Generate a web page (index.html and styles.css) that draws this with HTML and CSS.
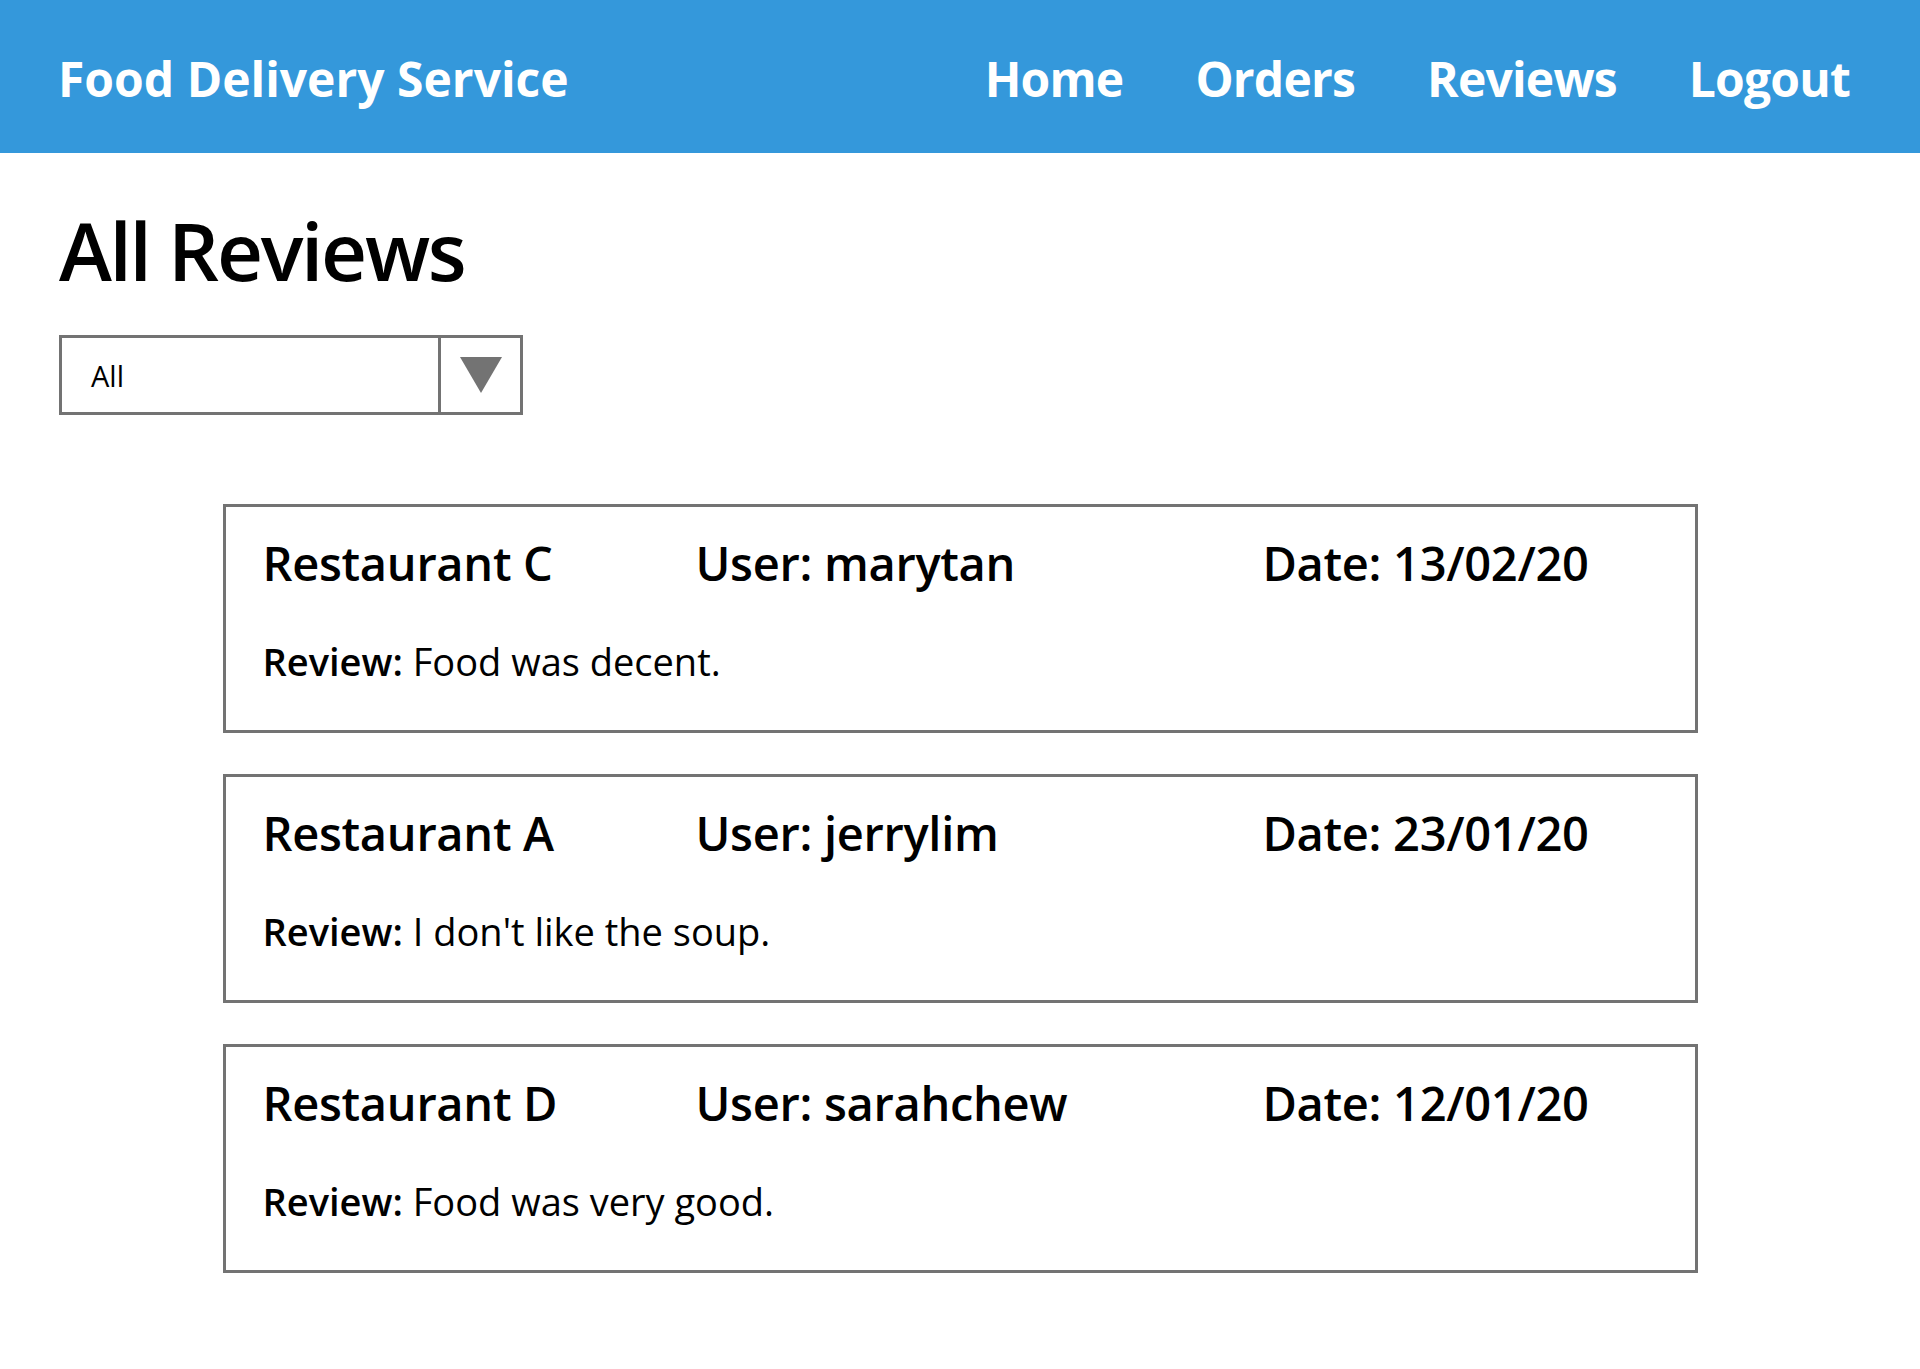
FILE: index.html
```html
<!DOCTYPE html>
<html lang="en">
<head>
<meta charset="utf-8">
<title>All Reviews - Food Delivery Service</title>
<link rel="stylesheet" href="styles.css">
</head>
<body>
<header class="topbar">
  <div class="brand">Food Delivery Service</div>
  <nav class="nav">
    <a class="nav-link" href="#">Home</a>
    <a class="nav-link" href="#">Orders</a>
    <a class="nav-link" href="#">Reviews</a>
    <a class="nav-link" href="#">Logout</a>
  </nav>
</header>
<main class="content">
  <h1 class="page-title">All Reviews</h1>
  <div class="select">
    <span class="select-value">All</span>
    <span class="select-btn"><span class="arrow"></span></span>
  </div>
  <section class="reviews">
    <article class="card">
      <div class="card-head">
        <span class="restaurant">Restaurant C</span>
        <span class="user">User: marytan</span>
        <span class="date">Date: 13/02/20</span>
      </div>
      <p class="review"><b>Review:</b> Food was decent.</p>
    </article>
    <article class="card">
      <div class="card-head">
        <span class="restaurant">Restaurant A</span>
        <span class="user">User: jerrylim</span>
        <span class="date">Date: 23/01/20</span>
      </div>
      <p class="review"><b>Review:</b> I don't like the soup.</p>
    </article>
    <article class="card">
      <div class="card-head">
        <span class="restaurant">Restaurant D</span>
        <span class="user">User: sarahchew</span>
        <span class="date">Date: 12/01/20</span>
      </div>
      <p class="review"><b>Review:</b> Food was very good.</p>
    </article>
  </section>
</main>
</body>
</html>
```
FILE: styles.css
```css
* { box-sizing: border-box; }
html, body { margin: 0; padding: 0; background: #fff; }
body {
  font-family: "Open Sans", "Noto Sans", sans-serif;
  color: #000;
}
.topbar {
  height: 153px;
  background: #3498db;
  display: flex;
  align-items: center;
  justify-content: space-between;
  padding: 4px 70px 0 58px;
  color: #fff;
}
.brand {
  font-size: 48px;
  font-weight: 700;
  line-height: 1;
  letter-spacing: 0;
}
.nav { display: flex; gap: 72px; }
.nav-link {
  color: #fff;
  text-decoration: none;
  font-size: 48px;
  font-weight: 700;
  line-height: 1;
  letter-spacing: -0.8px;
}
.content { padding: 57px 59px 60px; }
.page-title {
  margin: 0;
  font-size: 80px;
  font-weight: 600;
  line-height: 1;
  letter-spacing: -2.3px;
}
.select {
  margin-top: 45px;
  width: 464px;
  height: 80px;
  border: 3px solid #737373;
  display: flex;
  align-items: stretch;
}
.select-value {
  flex: 1;
  display: flex;
  align-items: center;
  padding-left: 29px;
  font-size: 29px;
  font-weight: 400;
}
.select-btn {
  width: 82px;
  border-left: 3px solid #737373;
  display: flex;
  align-items: center;
  justify-content: center;
}
.arrow {
  width: 0; height: 0;
  border-left: 21px solid transparent;
  border-right: 21px solid transparent;
  border-top: 36px solid #737373;
}
.reviews {
  margin-top: 89px;
  display: flex;
  flex-direction: column;
  align-items: center;
  gap: 41px;
}
.card {
  width: 1475px;
  border: 3px solid #737373;
  padding: 33px 104px 50px 37px;
}
.card-head {
  display: grid;
  grid-template-columns: 433px 1fr 330px;
  font-size: 47px;
  font-weight: 600;
  line-height: 1;
  letter-spacing: -0.3px;
}
.date { text-align: center; }
.review {
  margin: 55px 0 0;
  font-size: 38px;
  line-height: 1;
}
.review b { font-weight: 600; }
```
